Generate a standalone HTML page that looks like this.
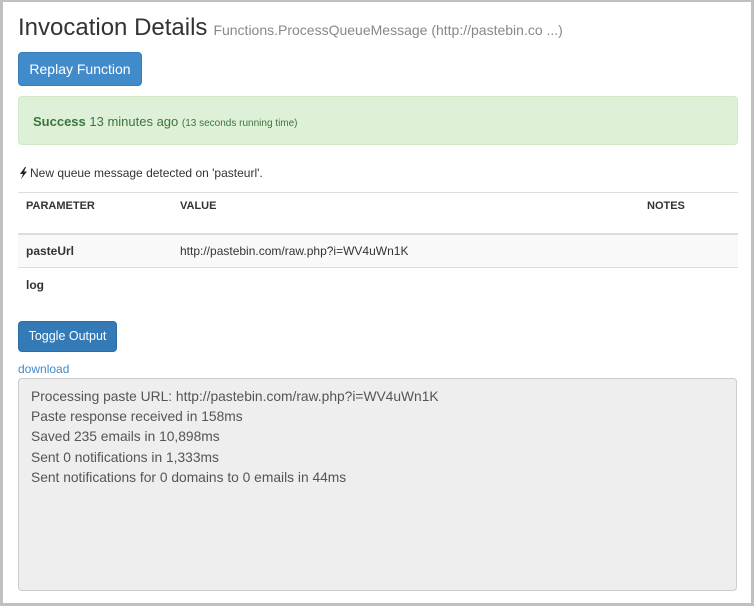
<!DOCTYPE html>
<html><head><style>
body{margin:0;width:754px;height:607px;overflow:hidden;font-family:"Liberation Sans",sans-serif;color:#333;background:#fff}
.frame{position:absolute;left:0;top:0;width:748px;height:601px;border:3px solid #c0c0c0;border-top-width:2px;border-right-width:3px}
.a{position:absolute;white-space:nowrap}
h1{position:absolute;left:18px;top:14px;margin:0;font-weight:normal;font-size:24px;color:#333}
h1 small{font-size:14px;color:#888;margin-left:6px}
.btn{position:absolute;border-radius:4px;color:#fff;font-size:14px;box-sizing:border-box;text-align:center}
.succ{position:absolute;left:18px;top:96px;width:720px;height:49px;box-sizing:border-box;background:#dff0d8;border:1px solid #d0e9c6;border-radius:4px;color:#3c763d;font-size:13px;padding:17px 14px}
.hl{position:absolute;left:18px;width:720px;height:1px;background:#ddd}
.ta{position:absolute;left:18px;top:378px;width:719px;height:213px;box-sizing:border-box;background:#eee;border:1px solid #ccc;border-radius:4px;padding:8px 12px;font-size:13.8px;line-height:20.2px;color:#555}
</style></head><body>
<div class="frame"></div>
<h1>Invocation Details<small>Functions.ProcessQueueMessage (http://pastebin.co ...)</small></h1>
<div class="btn" style="left:18px;top:52px;width:124px;height:34px;background:#428bca;border:1px solid #357ebd;line-height:32px;font-size:14px">Replay Function</div>
<div class="succ"><b>Success</b> 13 minutes ago <span style="font-size:10px">(13 seconds running time)</span></div>
<svg style="position:absolute;left:19px;top:167px" width="9" height="12" viewBox="0 0 9 12"><path d="M6 0L1 7h3l-2 5 6-7.5H5L7 0z" fill="#222"/></svg>
<div class="a" style="left:30px;top:166px;font-size:12px">New queue message detected on 'pasteurl'.</div>
<div class="hl" style="top:192px"></div>
<div class="a" style="left:26px;top:200px;font-size:11px;font-weight:bold">PARAMETER</div>
<div class="a" style="left:180px;top:200px;font-size:11px;font-weight:bold">VALUE</div>
<div class="a" style="left:647px;top:200px;font-size:11px;font-weight:bold">NOTES</div>
<div class="hl" style="top:233px;height:2px"></div>
<div style="position:absolute;left:18px;top:235px;width:720px;height:32px;background:#f9f9f9"></div>
<div class="hl" style="top:267px"></div>
<div class="a" style="left:26px;top:244px;font-size:12px;font-weight:bold">pasteUrl</div>
<div class="a" style="left:180px;top:244px;font-size:12px">http://pastebin.com/raw.php?i=WV4uWn1K</div>
<div class="a" style="left:26px;top:278px;font-size:12px;font-weight:bold">log</div>
<div class="btn" style="left:18px;top:321px;width:99px;height:31px;background:#337ab7;border:1px solid #2e6da4;line-height:29px;font-size:12.5px">Toggle Output</div>
<div class="a" style="left:18px;top:362px;font-size:12px;color:#428bca">download</div>
<div class="ta">Processing paste URL: http://pastebin.com/raw.php?i=WV4uWn1K<br>Paste response received in 158ms<br>Saved 235 emails in 10,898ms<br>Sent 0 notifications in 1,333ms<br>Sent notifications for 0 domains to 0 emails in 44ms</div>
</body></html>
